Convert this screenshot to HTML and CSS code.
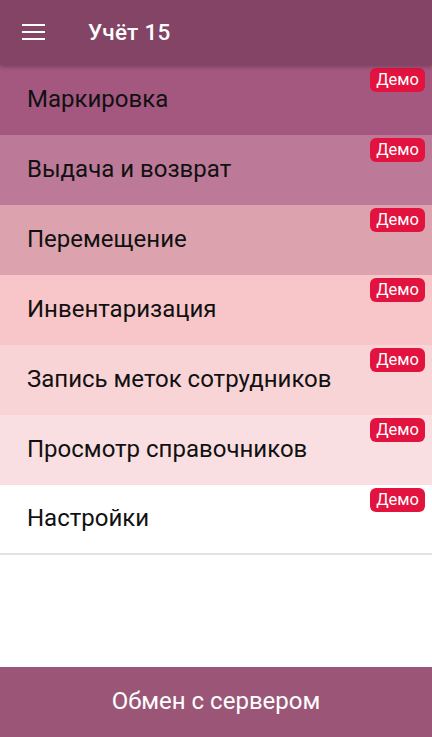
FILE: index.html
```html
<!DOCTYPE html>
<html lang="ru">
<head>
  <meta charset="UTF-8">
  <meta name="viewport" content="width=device-width, initial-scale=1">
  <title>Учёт 15</title>
  <link rel="stylesheet" href="styles.css">
</head>
<body>
  <div class="app">
    <header class="toolbar">
      <svg class="menu-icon" width="24" height="24" viewBox="0 0 24 24">
        <rect x="0" y="4" width="23" height="2" fill="#fff"/>
        <rect x="0" y="11" width="23" height="2" fill="#fff"/>
        <rect x="0" y="18" width="23" height="2" fill="#fff"/>
      </svg>
      <h1>Учёт 15</h1>
    </header>

    <ul class="menu">
      <li class="item c1">Маркировка<span class="badge">Демо</span></li>
      <li class="item c2">Выдача и возврат<span class="badge">Демо</span></li>
      <li class="item c3">Перемещение<span class="badge">Демо</span></li>
      <li class="item c4">Инвентаризация<span class="badge">Демо</span></li>
      <li class="item c5">Запись меток сотрудников<span class="badge">Демо</span></li>
      <li class="item c6">Просмотр справочников<span class="badge">Демо</span></li>
      <li class="item c7">Настройки<span class="badge">Демо</span></li>
    </ul>

    <button class="sync">Обмен с сервером</button>
  </div>
</body>
</html>
```

FILE: styles.css
```css
* { box-sizing: border-box; margin:0; padding:0; }
body { font-family: Roboto, "Noto Sans", sans-serif; background:#fff; }
.app { height:737px; display:flex; flex-direction:column; }

.toolbar { height:65px; background:#834466; display:flex; align-items:center; padding-left:22px; position:relative; z-index:2; box-shadow:0 2px 4px rgba(0,0,0,0.25); }
.menu-icon { display:block; margin-right:42px; margin-top:-1px; }
.toolbar h1 { color:#fff; font-size:22.5px; font-weight:500; letter-spacing:0.3px; margin-top:-1px; }

.menu { list-style:none; flex:1; }
.item { position:relative; height:70px; display:flex; align-items:center; padding-left:27px; font-size:24px; color:#111; padding-bottom:3px; }
.c1 { background:#a4587f; }
.c2 { background:#bd7a98; }
.c3 { background:#dca3af; }
.c4 { background:#f8c5c9; }
.c5 { background:#f9d4d6; }
.c6 { background:#f9dfe1; }
.c7 { background:#fff; border-bottom:2px solid #e2e2e2; }
.badge { position:absolute; top:3px; right:7px; background:#e2133f; color:#fff; font-size:16.5px; line-height:24px; height:24px; padding:0 6px; border-radius:6px; }

.sync { height:70px; border:none; background:#9b5677; color:#fff; font-family:inherit; font-size:24px; padding-bottom:3px; }
```
